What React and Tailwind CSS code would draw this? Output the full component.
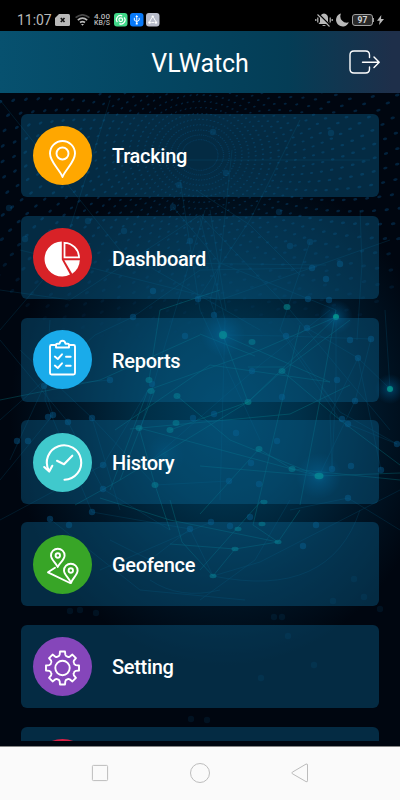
import React from "react";

const menuItems = [
  { label: "Tracking", color: "bg-[#ffa700]", icon: PinIcon },
  { label: "Dashboard", color: "bg-[#d82227]", icon: PieIcon },
  { label: "Reports", color: "bg-[#1aabea]", icon: ClipboardIcon },
  { label: "History", color: "bg-[#40c9cc]", icon: HistoryIcon },
  { label: "Geofence", color: "bg-[#38a527]", icon: RouteIcon },
  { label: "Setting", color: "bg-[#8546ba]", icon: GearIcon },
  { label: "", color: "bg-[#d81f45]", icon: null },
];

// every icon shares the 59px circle as its canvas
function IconBase({ children }) {
  return (
    <svg width="59" height="59" viewBox="0 0 59 59" fill="none" stroke="white" strokeWidth="1.9" strokeLinecap="round" strokeLinejoin="round">
      {children}
    </svg>
  );
}

function PinIcon() {
  return (
    <IconBase>
      <path d="M29.5 51 C27 44 17 36 17 27.5 A12.5 12.5 0 0 1 42 27.5 C42 36 32 44 29.5 51Z" />
      <circle cx="29.5" cy="27.5" r="6" />
    </IconBase>
  );
}

function PieIcon() {
  return (
    <IconBase>
      <path d="M28.8 13.5 A17.5 17.5 0 1 0 37 46.6 L28.8 31.5Z" fill="white" stroke="none" />
      <path d="M31.3 32.3 H46.8 A17 17 0 0 1 39.2 45.7Z" fill="white" stroke="none" />
      <path d="M31.5 14.8 A15 15 0 0 1 46 29.3 H31.5Z" strokeWidth="1.8" strokeLinejoin="miter" />
    </IconBase>
  );
}

function ClipboardIcon() {
  return (
    <IconBase>
      <path d="M22.5 15 H18.5 Q17 15 17 16.5 V43 Q17 44.5 18.5 44.5 H40.5 Q42 44.5 42 43 V16.5 Q42 15 40.5 15 H36.5" />
      <path d="M23 17.5 V14.8 Q23 13.8 24.3 13.8 H26.5 Q27 10.8 29.5 10.8 T32.5 13.8 H34.7 Q36 13.8 36 14.8 V17.5Z" />
      <path d="M21.8 26.5 L24.8 29 L29 24.3 M21.8 35.5 L24.8 38 L29 33.3 M33 26.8 H37.7 M33 35.8 H37.7" />
    </IconBase>
  );
}

function HistoryIcon() {
  return (
    <IconBase>
      <path d="M15.8 37.5 A17.2 17.2 0 1 1 31.5 46.7" strokeWidth="2.1" />
      <path d="M11.2 34 L16.2 38.6 L19.3 32.8" strokeWidth="2.1" />
      <path d="M24 27.8 L31 31.3 L39.3 22.7" strokeWidth="2.1" />
    </IconBase>
  );
}

function RouteIcon() {
  return (
    <IconBase>
      <path d="M24.7 32 C23 27.5 18 25 18 20.5 A6.8 6.8 0 0 1 31.6 20.5 C31.6 25 26.5 27.5 24.7 32Z" />
      <circle cx="24.8" cy="20.5" r="2.2" />
      <path d="M38 48 C36.5 43 31 40 31 35.5 A6.8 6.8 0 0 1 44.6 35.5 C44.6 40 39.5 43 38 48Z" />
      <circle cx="37.8" cy="35.5" r="2.2" />
      <path d="M22 32.8 L15 37.3 L37 48" />
    </IconBase>
  );
}

// eight teeth joined by rounded valleys
function gearPath() {
  const at = (r, a) => `${(29.5 + r * Math.cos(a)).toFixed(2)} ${(31 + r * Math.sin(a)).toFixed(2)}`;
  let d = "";
  for (let i = 0; i < 8; i++) {
    const a = (i * Math.PI) / 4 - Math.PI / 2;
    d += `${i === 0 ? "M" : "L"}${at(13.6, a - 0.21)}L${at(16.7, a - 0.15)}L${at(16.7, a + 0.15)}L${at(13.6, a + 0.21)}`;
    d += `Q${at(11.9, a + 0.3)} ${at(12.5, a + Math.PI / 8)}Q${at(11.9, a + 0.485)} ${at(13.6, a + 0.575)}`;
  }
  return `${d}Z`;
}

function GearIcon() {
  return (
    <IconBase>
      <path d={gearPath()} />
      <circle cx="29.5" cy="31" r="7.2" />
    </IconBase>
  );
}

// halftone dots fanning out from a point near the top of the screen
function makeDots() {
  const dots = [];
  for (let ring = 0; ring < 26; ring++) {
    const r = 18 + ring * 5.4 + ring * ring * 0.15;
    const count = 68;
    for (let i = 0; i < count; i++) {
      const a = ((i + (ring % 2) / 2) / count) * Math.PI * 2 + ring * 0.018;
      const x = 200 + r * Math.cos(a);
      const y = 155 + r * Math.sin(a) * 0.85;
      if (x < -4 || x > 404 || y < 92 || y > 370) continue;
      const fade = y > 220 ? Math.max(0, 1 - (y - 220) / 130) : 1;
      dots.push({ x, y, size: 0.7 + ring * 0.075, angle: x < 200 ? -35 : -12, fade });
    }
  }
  return dots;
}

const dots = makeDots();

const blueNodes = [
  [9, 208], [25, 239], [88, 221], [173, 207], [124, 231], [190, 241], [179, 185], [153, 291], [198, 299],
  [213, 132], [226, 173], [331, 133], [279, 212], [290, 246], [310, 242], [312, 268], [326, 279], [340, 264],
  [308, 299], [329, 300], [133, 317], [214, 315], [307, 328], [286, 336], [252, 371], [337, 380], [358, 358],
  [371, 339], [350, 340], [282, 397], [355, 401], [342, 419], [348, 424], [214, 414], [277, 441], [251, 463],
  [332, 469], [351, 466], [236, 433], [259, 484], [229, 481], [348, 498], [397, 444], [381, 470],
  [185, 336], [110, 380], [44, 386], [48, 417], [53, 415], [92, 418], [68, 422], [103, 465], [103, 489],
  [17, 441], [28, 441], [152, 384], [193, 418], [92, 512], [50, 519], [69, 525], [190, 529], [303, 546],
  [211, 522], [230, 526], [250, 517], [316, 525], [354, 579], [364, 597], [333, 601], [282, 617], [380, 609],
  [70, 611], [80, 610], [96, 613], [288, 636], [314, 665], [261, 678], [274, 617], [191, 719], [207, 720],
];

const tealNodes = [
  [149, 380], [151, 391], [177, 396], [139, 428], [176, 423], [170, 430], [155, 485], [252, 342],
  [282, 371], [248, 402], [259, 449], [292, 469], [264, 502], [262, 524], [238, 529], [278, 542], [235, 549],
  [213, 576], [287, 307],
];

const glows = [
  [223, 335, 22], [336, 317, 17], [390, 389, 15], [319, 476, 23], [165, 455, 20],
];

const tealLines = [
  "M223 335 L248 402 L170 430", "M248 402 L282 371 L350 320", "M223 335 L330 382 L210 365 L115 430",
  "M139 428 L155 485 L170 530", "M139 428 L292 469 L400 480", "M200 334 L255 356", "M248 367 L285 367",
  "M336 317 L248 402 L120 480", "M259 449 L292 469 L319 476", "M259 449 L200 514", "M282 371 L340 420 L400 465",
  "M300 325 L253 525 L278 542", "M200 466 L319 476 L400 473", "M148 390 L110 490", "M155 390 L120 480 L75 505",
  "M130 429 L290 414 L350 385", "M235 549 L278 542 L300 510", "M170 544 L235 549", "M336 317 L260 350 L148 390",
  "M200 335 L100 380 L0 400", "M262 500 L200 570", "M149 380 L160 310 L220 290", "M278 542 L170 520 L100 498",
  "M319 476 L230 440 L177 396", "M213 576 L235 549 M213 576 L182 542 L170 500", "M336 310 L320 400 L300 505",
];

const blueLines = [
  "M0 100 L120 250 L260 330", "M20 250 L220 300 L390 240", "M110 100 L60 260 L0 330", "M133 317 L200 270 L312 268",
  "M200 215 L290 310 L390 430", "M198 299 L250 220 L300 120", "M220 263 L210 300 L223 335", "M173 207 L220 263 L336 310",
  "M160 263 L326 265", "M360 210 L362 264 L357 340", "M390 389 L385 310", "M223 335 L286 336 L371 339",
  "M286 336 L340 412 L397 444", "M336 317 L336 380 L332 469", "M307 328 L358 358 L390 389", "M358 358 L330 415 L332 469",
  "M358 358 L381 470", "M371 339 L355 401 L319 476", "M348 424 L397 444", "M0 420 L95 335 L133 317",
  "M10 460 L44 386 L110 380", "M44 386 L53 415 L0 480", "M0 520 L103 465 L148 390", "M68 422 L103 489 L170 530",
  "M92 418 L155 485 L229 481", "M20 350 L92 418 L120 510", "M50 320 L45 400 L92 512", "M213 576 L260 562 L400 490",
  "M213 576 L190 529 L92 512", "M190 529 L150 560 L110 540", "M213 576 Q330 600 360 510", "M50 519 L140 590 L245 600",
  "M220 590 Q180 600 150 580", "M100 570 L211 522", "M290 500 L255 560 L200 600", "M200 218 L225 320 L220 500",
  "M330 310 L260 365 L140 470", "M400 530 L348 498 L290 510", "M321 387 L335 405", "M196 190 L250 225 L300 275",
  "M210 210 L226 310", "M205 210 L140 430", "M310 242 L280 330 L340 420", "M200 215 L70 300 L0 290",
  "M180 180 L200 310 L260 440", "M232 150 L215 310", "M0 340 L68 422", "M160 160 L370 160",
];

function Background() {
  return (
    <svg className="absolute inset-0 h-full w-full" viewBox="0 93 400 653" preserveAspectRatio="none">
      <defs>
        <radialGradient id="center-glow" gradientUnits="userSpaceOnUse" cx="225" cy="415" r="250" gradientTransform="translate(225 0) scale(0.86 1) translate(-225 0)">
          <stop offset="0" stopColor="#003e5d" />
          <stop offset="0.35" stopColor="#003049" />
          <stop offset="0.7" stopColor="#001627" />
          <stop offset="1" stopColor="#000610" />
        </radialGradient>
        <radialGradient id="node-glow">
          <stop offset="0" stopColor="#0083a8" stopOpacity="0.6" />
          <stop offset="0.3" stopColor="#006da8" stopOpacity="0.32" />
          <stop offset="1" stopColor="#005b95" stopOpacity="0" />
        </radialGradient>
      </defs>
      <rect y="93" width="400" height="653" fill="url(#center-glow)" />
      <g fill="#074a79">
        {dots.map((d, i) => (
          <ellipse
            key={i}
            cx={d.x}
            cy={d.y}
            rx={d.size}
            ry={d.size * 0.6}
            opacity={0.42 * d.fade}
            transform={`rotate(${d.angle} ${d.x} ${d.y})`}
          />
        ))}
      </g>
      <g fill="none" stroke="#087099" strokeWidth="0.6" opacity="0.32">
        {blueLines.map((d) => <path key={d} d={d} />)}
      </g>
      <g fill="none" stroke="#079098" strokeWidth="0.6" opacity="0.5">
        {tealLines.map((d) => <path key={d} d={d} />)}
      </g>
      {glows.map(([x, y, r]) => (
        <circle key={`${x}-${y}`} cx={x} cy={y} r={r} fill="url(#node-glow)" opacity={y === 455 ? 0.5 : 1} />
      ))}
      <g fill="#07659a">
        {blueNodes.map(([x, y], i) => (
          <circle key={i} cx={x} cy={y} r="3.2" opacity={y > 570 ? 0.13 : y < 250 ? 0.27 : 0.4} />
        ))}
      </g>
      <g fill="#078e91" opacity="0.55">
        {tealNodes.map(([x, y], i) => <ellipse key={i} cx={x} cy={y} rx="3.5" ry={y > 500 ? 2.2 : 3} />)}
      </g>
      <g fill="#05a093" opacity="0.75">
        <circle cx="223" cy="335" r="4" />
        <circle cx="336" cy="317" r="3" />
        <circle cx="390" cy="389" r="3" />
        <ellipse cx="319" cy="476" rx="4.5" ry="3.3" />
      </g>
    </svg>
  );
}

function StatusBar() {
  return (
    <div className="flex h-[31px] items-end justify-between bg-black pr-4 pb-[3px] pl-[17px] text-[#b9b9b9]">
      <div className="flex h-4 items-center">
        <span className="w-[38px] text-[14px] leading-4 tracking-[-0.05px]">11:07</span>
        <svg width="15" height="12" viewBox="0 0 15 12">
          <path d="M4 0 H13.5 Q15 0 15 1.5 V10.5 Q15 12 13.5 12 H1.5 Q0 12 0 10.5 V4Z" fill="#b9b9b9" />
          <path d="M5.8 4 L9.5 8 M9.5 4 L5.8 8" stroke="#111" strokeWidth="1.6" />
        </svg>
        <svg className="ml-[5px]" width="15" height="12" viewBox="0 0 15 12" fill="none" stroke="#b9b9b9" strokeWidth="1.7">
          <path d="M0.6 3.7 Q7.5 -2 14.4 3.7" stroke="#474747" />
          <path d="M2.8 6.2 Q7.5 2.2 12.2 6.2 M5 8.5 Q7.5 6.7 10 8.5" />
          <path d="M6 10 H9 L7.5 11.7Z" fill="#b9b9b9" stroke="none" />
        </svg>
        <div className="ml-1 flex w-4 flex-col items-center text-[8px] leading-[6.5px] font-medium">
          <span>4.00</span>
          <span className="text-[7px]">KB/S</span>
        </div>
        <div className="ml-1 flex gap-[2.5px]">
          <svg width="13.5" height="13.5" viewBox="0 0 14 14" fill="none" stroke="white">
            <rect width="14" height="14" rx="3" fill="#40d888" stroke="none" />
            <path d="M3.5 9.5 A4.2 4.2 0 0 1 8.5 3 M10.5 4.5 A4.2 4.2 0 0 1 5.5 11" strokeWidth="1.2" />
            <circle cx="7" cy="7" r="1.9" strokeWidth="1.2" />
          </svg>
          <svg width="13.5" height="13.5" viewBox="0 0 14 14" fill="none" stroke="white" strokeWidth="1">
            <rect width="14" height="14" rx="3" fill="#0879f8" stroke="none" />
            <path d="M7 3 V11 M4.5 5 V7.5 L7 9 L9.5 7.5 V5" />
            <path d="M5.5 4.2 L7 2 L8.5 4.2Z M6 10 H8 V12 H6Z" fill="white" stroke="none" />
          </svg>
          <svg width="13.5" height="13.5" viewBox="0 0 14 14" fill="none" stroke="white" strokeWidth="1">
            <rect width="14" height="14" rx="3" fill="#b9bdcb" stroke="none" />
            <path d="M6.3 4.5 L4 8.5 M7.7 4.5 L10 8.5 M5.5 9.8 H8.5" />
            <circle cx="7" cy="3.7" r="1.2" fill="white" stroke="none" />
            <circle cx="3.7" cy="9.8" r="1.3" fill="white" stroke="none" />
            <circle cx="10.3" cy="9.8" r="1.3" fill="white" stroke="none" />
          </svg>
        </div>
      </div>
      <div className="flex h-4 items-center">
        <svg width="18" height="14" viewBox="0 0 18 14" fill="#b9b9b9">
          <path d="M9 0.5 Q13 1 13 5 V9 L14.5 11 H3.5 L5 9 V5 Q5 1 9 .5Z M7 12 H11 Q9 14 7 12Z" />
          <path d="M2.8 4.5 V9.5 M15.2 4.5 V9.5 M.8 6 V8 M17.2 6 V8" stroke="#b9b9b9" strokeWidth="1.2" />
          <path d="M3.5 .8 L15.5 12.8" stroke="black" strokeWidth="1.4" />
          <path d="M2.5 1.5 L14.5 13.5" stroke="#b9b9b9" strokeWidth="1.1" />
        </svg>
        <svg className="ml-[3px]" width="13" height="14" viewBox="0 0 13 14">
          <path d="M5 .5 A6.6 6.6 0 1 0 12.8 9.3 A6.4 6.4 0 0 1 5 .5Z" fill="#b9b9b9" />
        </svg>
        <span className="ml-[3px] flex h-3 w-[21px] items-center justify-center rounded-[3px] border border-[#a0a0a0] bg-[#292929] text-[8.5px] leading-none font-bold text-[#d5d5d5]">97</span>
        <span className="h-1 w-px bg-[#a0a0a0]" />
        <svg className="ml-[3px]" width="7" height="10" viewBox="0 0 7 10">
          <path d="M4.3 0 L0 5.7 H2.7 L2 10 L7 4 H4Z" fill="#b9b9b9" />
        </svg>
      </div>
    </div>
  );
}

function Header() {
  return (
    <header className="grid h-[62px] grid-cols-[1fr_auto_1fr] items-center bg-[linear-gradient(90deg,#07516f_0%,#044763_35%,#043d56_72%,#1e2f4a_98%)] px-5 text-white">
      <span />
      <h1 className="pt-1 text-[25px] leading-8 font-normal tracking-[-0.1px]">VLWatch</h1>
      <button className="justify-self-end">
        <svg width="31" height="24" viewBox="0 0 31 24" fill="none" stroke="white" strokeWidth="1.4" strokeLinecap="round" strokeLinejoin="round">
          <path d="M20.5 7.5 V5 Q20.5 1 16.5 1 H5 Q1 1 1 5 V19 Q1 23 5 23 H16.5 Q20.5 23 20.5 19 V17" />
          <path d="M13.5 12.3 H30 M25 7 L30.2 12.3 L25 17.5" />
        </svg>
      </button>
    </header>
  );
}

function MenuCard({ label, color, icon: Icon }) {
  return (
    <button className="flex h-[83.6px] w-full shrink-0 items-center gap-5 rounded-[6px] bg-[#0a6998]/38 pl-3 text-left">
      <span className={`flex h-[59px] w-[59px] shrink-0 items-center justify-center overflow-hidden rounded-full ${color}`}>
        {Icon && <Icon />}
      </span>
      <span className="pt-0.5 text-[20px] leading-6 font-medium tracking-[-0.3px] text-white">{label}</span>
    </button>
  );
}

function NavBar() {
  return (
    <nav className="flex h-[54px] items-center justify-between border-t border-[#858585] bg-[#fafafa] px-[90px] pb-px">
      <svg width="20" height="20" viewBox="0 0 20 20" fill="none" stroke="#bcbcbc">
        <rect x="2.4" y="2.4" width="15.2" height="15.2" rx="1" />
      </svg>
      <svg width="20" height="20" viewBox="0 0 20 20" fill="none" stroke="#bcbcbc">
        <circle cx="10" cy="10" r="9.5" />
      </svg>
      <svg width="20" height="20" viewBox="0 0 20 20" fill="none" stroke="#bcbcbc">
        <path d="M2.3 9.2 L16 1.1 Q17.5 .5 17.5 2 V17.8 Q17.5 19.3 16 18.6 L2.3 10.7 Q1.3 10 2.3 9.2Z" />
      </svg>
    </nav>
  );
}

const App = () => {
  return (
    <div className="flex h-[800px] w-[400px] flex-col overflow-hidden bg-black font-['Roboto',sans-serif]">
      <StatusBar />
      <Header />
      <main className="relative h-[653px] overflow-hidden">
        <Background />
        <div className="relative flex h-[647.5px] flex-col gap-[18.6px] overflow-hidden px-[21px] pt-[20.7px]">
          {menuItems.map((item, i) => <MenuCard key={i} {...item} />)}
        </div>
      </main>
      <NavBar />
    </div>
  );
};

export default App;
